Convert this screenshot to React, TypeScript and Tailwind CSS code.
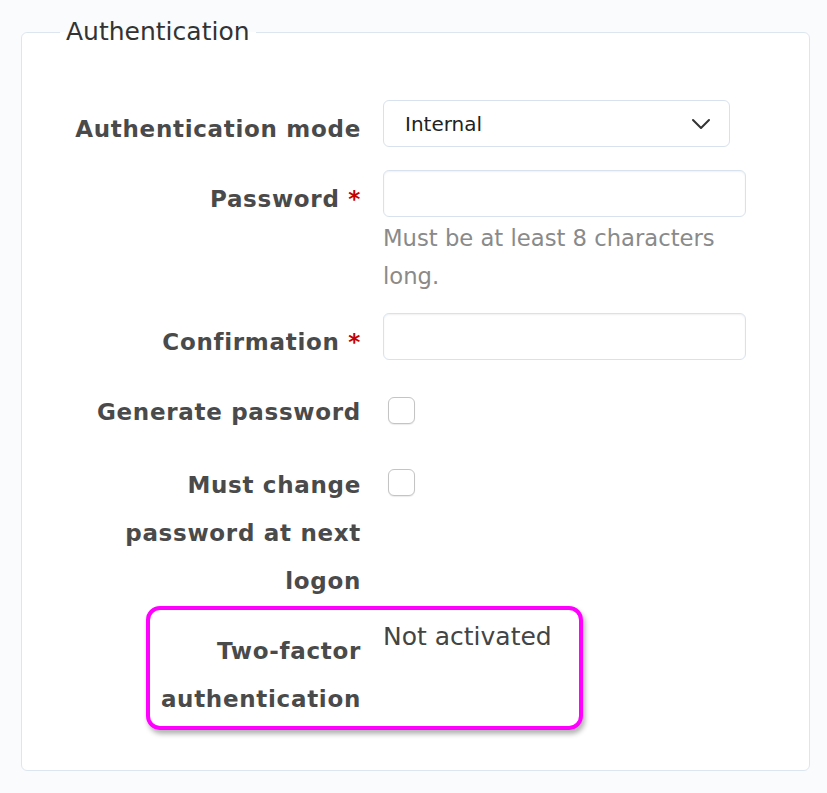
import React from 'react';

const font = { fontFamily: '"DejaVu Sans", Verdana, sans-serif' };

const Label = ({ children, required }: { children: React.ReactNode; required?: boolean }) => (
  <div className="w-[340px] shrink-0 pt-[5px] pr-[1px] text-right text-[23px] font-bold leading-[48px] tracking-[0.7px] text-[#4a4a4a]">
    {children}
    {required && <span className="text-[#c40000]"> *</span>}
  </div>
);

const TextInput = () => (
  <input
    type="password"
    className="h-[47px] w-[363px] rounded-[6px] border border-[#d8e2ee] bg-white px-3 shadow-[inset_0_1px_2px_rgba(0,0,0,0.06)] outline-none"
  />
);

const Checkbox = ({ top }: { top: string }) => (
  <div className={`${top} ml-[5px] h-[27px] w-[27px] rounded-[6px] border border-[#c4c4c4] bg-white shadow-[0_1px_1px_rgba(0,0,0,0.08)]`} />
);

export default function App() {
  return (
    <div className="min-h-[793px] w-[827px] bg-[#f9fbfd] pt-[17px] pl-[21px]" style={font}>
      <fieldset className="m-0 h-[754px] w-[789px] rounded-[6px] border border-[#dde6ef] bg-white p-0">
        <legend className="ml-[38px] px-[6px] text-[25px] leading-[30px] text-[#333]">Authentication</legend>

        <div className="flex flex-col pt-[53px]">
          <div className="flex gap-[21px]">
            <Label>Authentication mode</Label>
            <div className="flex h-[47px] w-[347px] items-center justify-between rounded-[6px] border border-[#d8e2ee] bg-white pl-[21px] pr-[18px] text-[20px] text-[#222]">
              <span>Internal</span>
              <svg width="20" height="12" viewBox="0 0 20 12" fill="none" stroke="#333" strokeWidth="2" strokeLinecap="round" strokeLinejoin="round">
                <path d="M2 2l8 8 8-8" />
              </svg>
            </div>
          </div>

          <div className="mt-[17px] flex gap-[21px]">
            <Label required>Password</Label>
            <div>
              <TextInput />
              <p className="mt-[2px] w-[363px] text-[22.7px] leading-[38px] text-[#8a8a8a]">
                Must be at least 8 characters long.
              </p>
            </div>
          </div>

          <div className="mt-[18px] flex gap-[21px]">
            <Label required>Confirmation</Label>
            <TextInput />
          </div>

          <div className="mt-[17px] flex gap-[21px]">
            <Label>Generate password</Label>
            <Checkbox top="mt-[14px]" />
          </div>

          <div className="mt-[20px] flex gap-[21px]">
            <Label>
              Must change
              <br />
              password at next
              <br />
              logon
            </Label>
            <Checkbox top="mt-[13px]" />
          </div>

          <div className="relative mt-[17px] flex gap-[21px]">
            <Label>
              Two-factor
              <br />
              authentication
            </Label>
            <div className="text-[25px] leading-[30px] text-[#444]">Not activated</div>
            <div className="pointer-events-none absolute left-[124px] top-[-16px] h-[124px] w-[437px] rounded-[14px] border-[4px] border-[#ff00ff] shadow-[2px_4px_5px_rgba(0,0,0,0.3)]" />
          </div>
        </div>
      </fieldset>
    </div>
  );
}
